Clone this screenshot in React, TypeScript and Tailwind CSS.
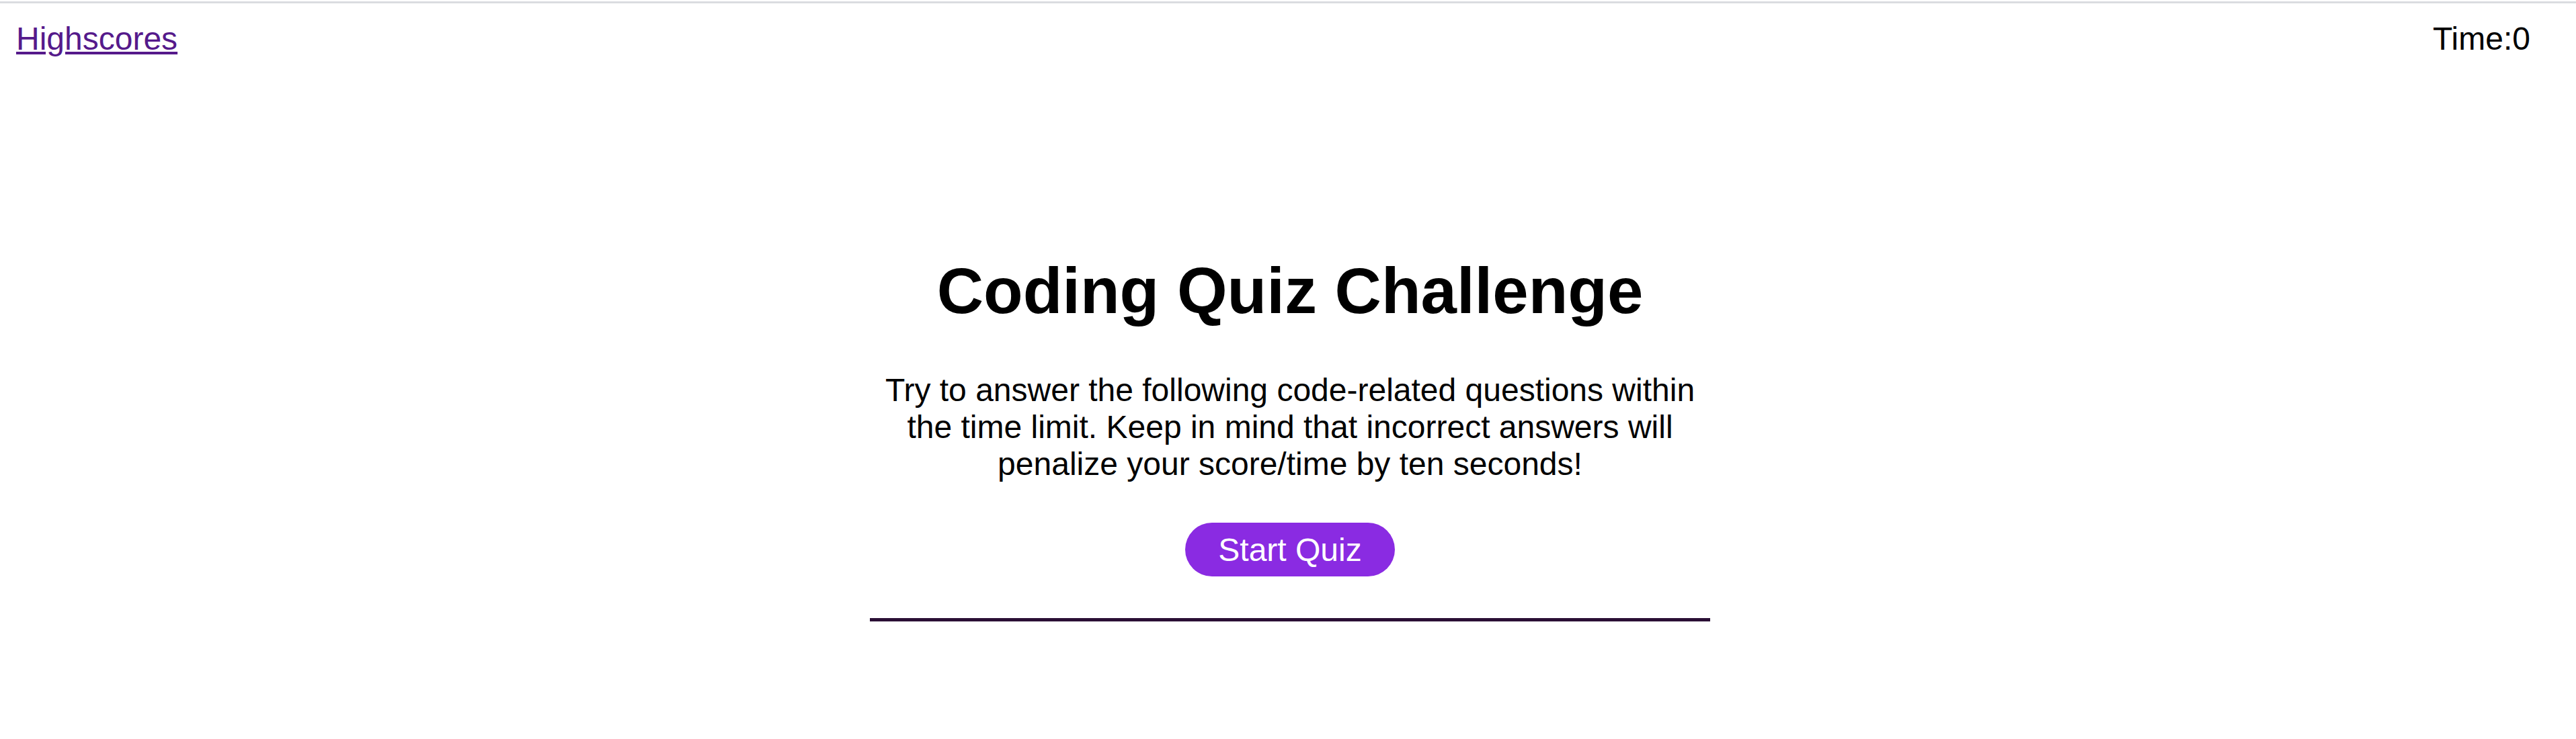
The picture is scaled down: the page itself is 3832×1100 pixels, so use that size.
export default function App() {
  const font = { fontFamily: '"Liberation Sans", Arial, sans-serif' };

  return (
    <div className="min-h-[1100px] bg-white text-black" style={font}>
      {/* top hairline */}
      <div className="mt-[2px] h-[3px] bg-[#dadce0]" />

      <header className="flex items-start justify-between pl-[24px] pr-[68px] pt-[25px] text-[48px] leading-[1.15]">
        <a href="#" className="text-[#551a8b] underline">
          Highscores
        </a>
        <div>Time:0</div>
      </header>

      <div className="pl-[6px]">
        <main className="mx-auto w-[1250px] border-b-[5px] border-[#2a0f35] pb-[62px] text-center">
          <h1 className="mt-[293px] mb-[64px] text-[96px] font-bold leading-[1.15]">
            Coding Quiz Challenge
          </h1>
          <p className="text-[48px] leading-[1.15]">
            Try to answer the following code-related questions within the time limit. Keep in mind
            that incorrect answers will penalize your score/time by ten seconds!
          </p>
          <button className="mt-[60px] h-[80px] rounded-full bg-[#8a2be2] px-[49px] text-[48px] leading-[1.15] text-white">
            Start Quiz
          </button>
        </main>
      </div>
    </div>
  );
}
